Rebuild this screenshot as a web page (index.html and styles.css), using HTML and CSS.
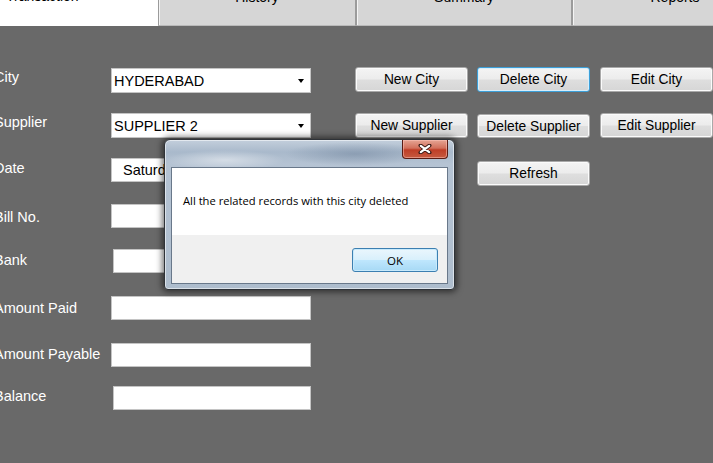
FILE: index.html
```html
<!DOCTYPE html>
<html>
<head>
<meta charset="utf-8">
<link rel="stylesheet" href="styles.css">
</head>
<body>
<div class="window">
  <div class="tabs">
    <div class="tab active">Transaction</div>
    <div class="tab t-history">History</div>
    <div class="tab t-summary">Summary</div>
    <div class="tab t-reports">Reports</div>
  </div>
  <div class="main">
    <div class="form">
      <div class="lbl l1">City</div>
      <div class="combo"><span>HYDERABAD</span><i class="arrow"></i></div>
      <div class="lbl l1">Supplier</div>
      <div class="combo"><span>SUPPLIER 2</span><i class="arrow"></i></div>
      <div class="lbl l2">Date</div>
      <div class="field date">Saturday, March 01, 2014</div>
      <div class="lbl l5">Bill No.</div>
      <div class="field"></div>
      <div class="lbl l3">Bank</div>
      <div class="field shifted"></div>
      <div class="lbl l4">Amount Paid</div>
      <div class="field"></div>
      <div class="lbl l3">Amount Payable</div>
      <div class="field"></div>
      <div class="lbl l2">Balance</div>
      <div class="field shifted"></div>
    </div>
    <div class="buttons">
      <button class="btn">New City</button>
      <button class="btn focused">Delete City</button>
      <button class="btn">Edit City</button>
      <button class="btn">New Supplier</button>
      <button class="btn low">Delete Supplier</button>
      <button class="btn">Edit Supplier</button>
      <span></span>
      <button class="btn refresh">Refresh</button>
      <span></span>
    </div>
  </div>

  <div class="dialog">
    <div class="titlebar">
      <div class="close">
        <svg width="14" height="10" viewBox="0 0 14 10">
          <path d="M2.5 1.5 L11.5 8.5 M11.5 1.5 L2.5 8.5" stroke="#3a1a16" stroke-width="4" stroke-linecap="round" fill="none"/>
          <path d="M2.8 1.8 L11.2 8.2 M11.2 1.8 L2.8 8.2" stroke="#ffffff" stroke-width="2.2" stroke-linecap="round" fill="none"/>
        </svg>
      </div>
    </div>
    <div class="client">
      <div class="message">All the related records with this city deleted</div>
      <div class="footer">
        <button class="ok">OK</button>
      </div>
    </div>
  </div>
</div>
</body>
</html>
```

FILE: styles.css
```css
html, body {
  margin: 0;
  padding: 0;
}

body {
  width: 713px;
  height: 463px;
  overflow: hidden;
  background: #696969;
  font-family: "Liberation Sans", Arial, sans-serif;
}

.window {
  position: relative;
  width: 713px;
  height: 463px;
  overflow: hidden;
}

/* ---------- tabs ---------- */
.tabs {
  display: flex;
  height: 37px;
  margin-top: -11px;
  width: 900px;
}

.tab {
  box-sizing: border-box;
  height: 37px;
  font-size: 14px;
  line-height: 16px;
  color: #000;
  background: #d6d6d6;
  border: 1px solid #9b9b9b;
  border-top: none;
  border-bottom-color: #b9b9b9;
  box-shadow: inset 1px 0 #f4f4f4;
  text-align: center;
}

.tab.active {
  width: 158px;
  background: #fff;
  border: none;
  box-shadow: none;
  text-align: left;
  padding-left: 6px;
  line-height: 15px;
}

.t-history { width: 198px; }
.t-summary { width: 216px; }
.t-reports { width: 206px; }

/* ---------- main ---------- */
.main {
  display: flex;
  align-items: flex-start;
  padding-top: 42px;
}

.form {
  display: grid;
  grid-template-columns: 111px 200px;
  grid-template-rows: 45px 45px 46px 45px 47px 47px 43px 26px;
  align-items: start;
}

.lbl {
  margin-left: -6px;
  color: #fff;
  font-size: 14.5px;
  line-height: 16px;
  white-space: nowrap;
}

.l1 { margin-top: 1px; }
.l2 { margin-top: 2px; }
.l3 { margin-top: 3px; }
.l4 { margin-top: 4px; }
.l5 { margin-top: 5px; }

.combo {
  box-sizing: border-box;
  height: 25px;
  background: #fff;
  border: 1px solid #c4c4c4;
  display: flex;
  align-items: center;
  justify-content: space-between;
  padding: 0 6px 0 2px;
  font-size: 14.5px;
  color: #000;
}

.arrow {
  width: 0;
  height: 0;
  border-left: 3.5px solid transparent;
  border-right: 3.5px solid transparent;
  border-top: 4px solid #000;
  margin-top: 1px;
}

.field {
  box-sizing: border-box;
  height: 24px;
  background: #fff;
  border: 1px solid #c4c4c4;
  font-size: 14.5px;
  line-height: 22px;
  color: #000;
  white-space: nowrap;
  overflow: hidden;
}

.field.date {
  padding-left: 11px;
}

.field.shifted {
  margin-left: 2px;
}

/* ---------- buttons ---------- */
.buttons {
  display: grid;
  grid-template-columns: 122px 123px 113px;
  grid-template-rows: 46px 47px 25px;
  align-items: start;
  margin-left: 44px;
  margin-top: -1px;
}

.btn {
  box-sizing: border-box;
  width: 113px;
  height: 25px;
  padding: 0;
  font-family: "Liberation Sans", Arial, sans-serif;
  font-size: 13.8px;
  color: #000;
  border: 1px solid #a9a9a9;
  border-radius: 3px;
  background: linear-gradient(to bottom, #f4f4f4 0%, #ececec 48%, #dedede 52%, #d6d6d6 100%);
  box-shadow: inset 0 0 0 1px #fbfbfb;
}

.btn.focused {
  border-color: #3c9fd8;
  box-shadow: inset 0 0 0 1px #d6eefb;
}

.btn.low {
  margin-top: 1px;
  height: 24px;
}

.btn.refresh {
  margin-top: 1px;
}

/* ---------- dialog ---------- */
.dialog {
  position: absolute;
  left: 164px;
  top: 139px;
  width: 291px;
  height: 151px;
  box-sizing: border-box;
  border: 1px solid #2f3338;
  border-radius: 6px 6px 4px 4px;
  background:
    radial-gradient(ellipse 60px 10px at 60px 20px, rgba(255,255,255,0.45), rgba(255,255,255,0) 100%),
    radial-gradient(ellipse 70px 12px at 190px 14px, rgba(110,130,155,0.5), rgba(110,130,155,0) 100%),
    linear-gradient(to bottom, #c3cfdc 0px, #a9b9cb 12px, #b5c3d3 24px, #aebdcd 100%);
  box-shadow: 0 0 6px 2px rgba(0,0,0,0.55), inset 0 0 0 1px rgba(255,255,255,0.55);
  display: flex;
  flex-direction: column;
  padding: 0 6px 5px 6px;
}

.titlebar {
  height: 27px;
  display: flex;
  justify-content: flex-end;
  align-items: flex-start;
}

.close {
  box-sizing: border-box;
  width: 46px;
  height: 19px;
  border: 1px solid #5a1b13;
  border-top: none;
  border-radius: 0 0 4px 4px;
  background: linear-gradient(to bottom, #e6a594 0%, #d2705c 45%, #bf3d26 55%, #c65a40 100%);
  box-shadow: inset 0 0 0 1px rgba(255,200,190,0.5);
  display: flex;
  align-items: center;
  justify-content: center;
}

.close svg {
  display: block;
}

.client {
  flex: 1;
  border: 1px solid #69788a;
  background: #fff;
  display: flex;
  flex-direction: column;
}

.message {
  height: 67px;
  box-sizing: border-box;
  padding: 26px 0 0 11px;
  font-family: "Open Sans", "Noto Sans", sans-serif;
  font-size: 11.2px;
  line-height: 14px;
  color: #000;
  white-space: nowrap;
}

.footer {
  flex: 1;
  background: #f0f0f0;
  display: flex;
  justify-content: flex-end;
  align-items: flex-start;
  padding: 13px 9px 0 0;
}

.ok {
  box-sizing: border-box;
  width: 86px;
  height: 24px;
  padding: 0;
  font-family: "Open Sans", "Noto Sans", sans-serif;
  font-size: 11.5px;
  color: #000;
  border: 1px solid #3c7fb1;
  border-radius: 3px;
  background: linear-gradient(to bottom, #eaf6fd 0%, #d9f0fc 48%, #bee6fd 52%, #a7d9f5 100%);
  box-shadow: inset 0 0 0 1px #c8eafc;
}
```
